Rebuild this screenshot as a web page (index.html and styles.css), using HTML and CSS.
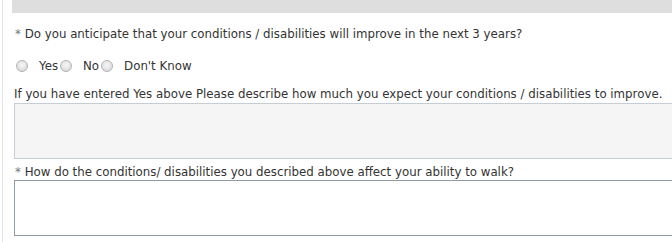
FILE: index.html
```html
<!DOCTYPE html>
<html>
<head>
<meta charset="utf-8">
<link rel="stylesheet" href="styles.css">
</head>
<body>
<div class="page">
  <div class="bar"></div>
  <div class="question q1"><span class="req">*</span> Do you anticipate that your conditions / disabilities will improve in the next 3 years?</div>
  <div class="radios">
    <label class="opt"><input type="radio" name="improve" class="radio"><span class="opt-text">Yes</span></label>
    <label class="opt"><input type="radio" name="improve" class="radio"><span class="opt-text">No</span></label>
    <label class="opt"><input type="radio" name="improve" class="radio"><span class="opt-text">Don't Know</span></label>
  </div>
  <div class="question q3">If you have entered Yes above Please describe how much you expect your conditions / disabilities to improve.</div>
  <textarea class="field field-disabled"></textarea>
  <div class="question q4"><span class="req">*</span> How do the conditions/ disabilities you described above affect your ability to walk?</div>
  <textarea class="field field-active"></textarea>
</div>
</body>
</html>
```
FILE: styles.css
```css
html, body {
  margin: 0;
  padding: 0;
  background: #ffffff;
  overflow: hidden;
}
body {
  font-family: "DejaVu Sans", Verdana, sans-serif;
  font-size: 11.8px;
  color: #333333;
}
.page {
  margin-left: 2px;
  border-left: 1px solid #e4e4e4;
  padding-left: 9px;
  min-height: 242px;
  box-sizing: border-box;
}
.bar {
  height: 13px;
  background: #dedede;
}
.question {
  line-height: 14px;
  white-space: nowrap;
  padding-left: 3px;
}
.req {
  color: #777777;
}
.q1 {
  margin-top: 14px;
}
.radios {
  display: flex;
  align-items: center;
  height: 14px;
  margin-top: 18px;
  padding-left: 4px;
}
.opt {
  display: flex;
  align-items: center;
  line-height: 14px;
}
.radio {
  appearance: none;
  -webkit-appearance: none;
  margin: 0;
  width: 12px;
  height: 12px;
  border-radius: 50%;
  border: 1px solid #b3b3b3;
  background: radial-gradient(circle at 50% 40%, #f6f6f6 0%, #e2e2e2 60%, #d0d0d0 100%);
  box-sizing: border-box;
}
.opt-text {
  margin-left: 11px;
  margin-right: 2px;
}
.q3 {
  margin-top: 14px;
  padding-left: 2px;
}
.field {
  display: block;
  width: calc(100% - 2px);
  height: 56px;
  margin: 2px 0 0 2px;
  padding: 0;
  box-sizing: border-box;
  resize: none;
  font: inherit;
  outline: none;
  border-right: none;
}
.field-disabled {
  background: #f5f5f5;
  border: 1px solid #c6ced5;
  border-right: none;
}
.q4 {
  margin-top: 6px;
}
.field-active {
  margin-top: 1px;
  background: #ffffff;
  border: 1px solid #8e9ea9;
  border-right: none;
}
```
